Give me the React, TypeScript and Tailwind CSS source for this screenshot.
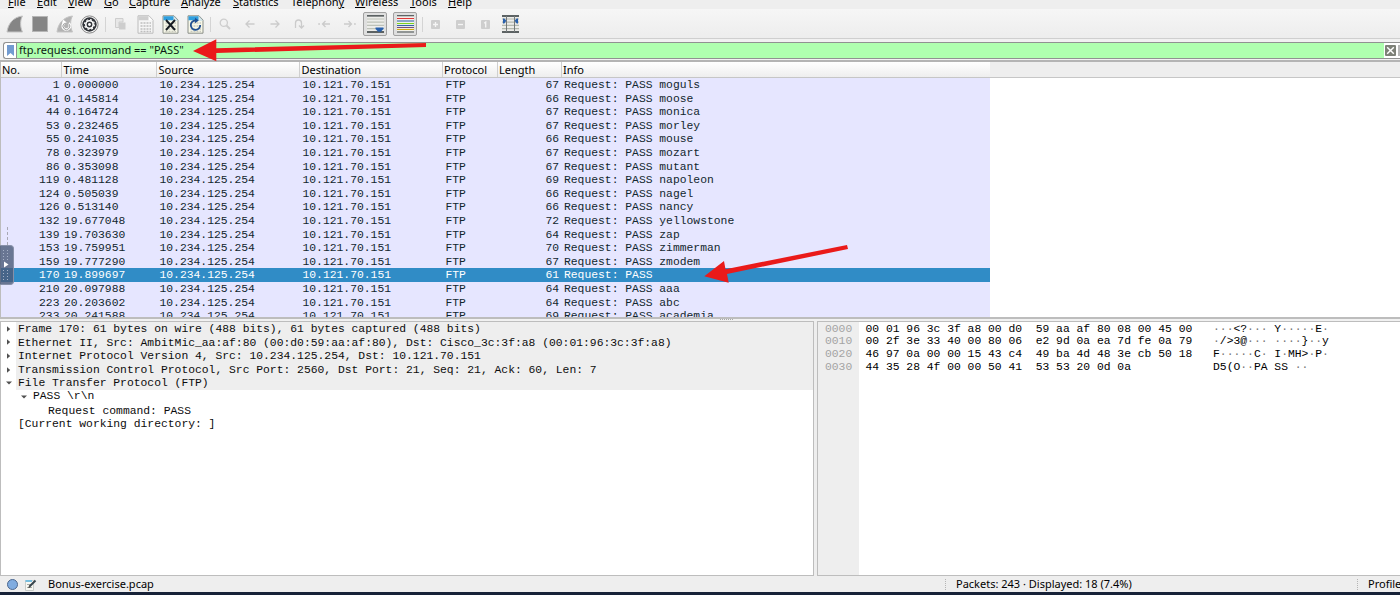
import { ReactNode } from 'react';
import clsx from 'clsx';

interface IPacket {
  no: number;
  time: string;
  length: number;
  info: string;
}

const SELECTED = 170;

const menuItems = [
  { hot: 'F', rest: 'ile', width: 'w-[29px]' },
  { hot: 'E', rest: 'dit', width: 'w-[31px]' },
  { hot: 'V', rest: 'iew', width: 'w-[36px]' },
  { hot: 'G', rest: 'o', width: 'w-[25px]' },
  { hot: 'C', rest: 'apture', width: 'w-[52px]' },
  { hot: 'A', rest: 'nalyze', width: 'w-[52px]' },
  { hot: 'S', rest: 'tatistics', width: 'w-[58px]' },
  { pre: 'Telephon', hot: 'y', rest: '', width: 'w-[64px]' },
  { hot: 'W', rest: 'ireless', width: 'w-[55px]' },
  { hot: 'T', rest: 'ools', width: 'w-[38px]' },
  { hot: 'H', rest: 'elp', width: 'w-[30px]' },
];

const columns = [
  { name: 'No.', width: 'w-[61px] pl-px' },
  { name: 'Time', width: 'w-[95px] pl-[1.5px]' },
  { name: 'Source', width: 'w-[143px] pl-[1.5px]' },
  { name: 'Destination', width: 'w-[143px] pl-[1.5px]' },
  { name: 'Protocol', width: 'w-[55px] pl-px' },
  { name: 'Length', width: 'w-[64px] pl-px' },
];

const packets: IPacket[] = [
  { no: 1, time: '0.000000', length: 67, info: 'moguls' },
  { no: 41, time: '0.145814', length: 66, info: 'moose' },
  { no: 44, time: '0.164724', length: 67, info: 'monica' },
  { no: 53, time: '0.232465', length: 67, info: 'morley' },
  { no: 55, time: '0.241035', length: 66, info: 'mouse' },
  { no: 78, time: '0.323979', length: 67, info: 'mozart' },
  { no: 86, time: '0.353098', length: 67, info: 'mutant' },
  { no: 119, time: '0.481128', length: 69, info: 'napoleon' },
  { no: 124, time: '0.505039', length: 66, info: 'nagel' },
  { no: 126, time: '0.513140', length: 66, info: 'nancy' },
  { no: 132, time: '19.677048', length: 72, info: 'yellowstone' },
  { no: 139, time: '19.703630', length: 64, info: 'zap' },
  { no: 153, time: '19.759951', length: 70, info: 'zimmerman' },
  { no: 159, time: '19.777290', length: 67, info: 'zmodem' },
  { no: 170, time: '19.899697', length: 61, info: '' },
  { no: 210, time: '20.097988', length: 64, info: 'aaa' },
  { no: 223, time: '20.203602', length: 64, info: 'abc' },
  { no: 233, time: '20.241588', length: 69, info: 'academia' },
];

const protocols = [
  { text: 'Frame 170: 61 bytes on wire (488 bits), 61 bytes captured (488 bits)', open: false },
  { text: 'Ethernet II, Src: AmbitMic_aa:af:80 (00:d0:59:aa:af:80), Dst: Cisco_3c:3f:a8 (00:01:96:3c:3f:a8)', open: false },
  { text: 'Internet Protocol Version 4, Src: 10.234.125.254, Dst: 10.121.70.151', open: false },
  { text: 'Transmission Control Protocol, Src Port: 2560, Dst Port: 21, Seq: 21, Ack: 60, Len: 7', open: false },
  { text: 'File Transfer Protocol (FTP)', open: true },
];

const hexRows = [
  { offset: '0000', bytes: '00 01 96 3c 3f a8 00 d0  59 aa af 80 08 00 45 00', ascii: '···<?··· Y·····E·' },
  { offset: '0010', bytes: '00 2f 3e 33 40 00 80 06  e2 9d 0a ea 7d fe 0a 79', ascii: '·/>3@··· ····}··y' },
  { offset: '0020', bytes: '46 97 0a 00 00 15 43 c4  49 ba 4d 48 3e cb 50 18', ascii: 'F·····C· I·MH>·P·' },
  { offset: '0030', bytes: '44 35 28 4f 00 00 50 41  53 53 20 0d 0a', ascii: 'D5(O··PA SS ··' },
];

const Separator = () => <div className="h-[15px] w-px bg-[#d4d4d4]" />;

const Slot = ({ width, children }: { width: string; children: ReactNode }) => (
  <div className={clsx('flex shrink-0 items-center justify-center', width)}>{children}</div>
);

const Fin = ({ restart }: { restart?: boolean }) => (
  <svg width="18" height="18" viewBox="0 0 18 18">
    <path d="M1 17C2 9 7 2 16.5 1C14 5 14 12 16.5 17Z" fill={restart ? '#b3b3b3' : '#858585'} stroke="#c4c4c4" strokeWidth="1" />
    {restart && (
      <>
        <path d="M12.6 8.2A3.6 3.6 0 1 1 8 8.2" fill="none" stroke="#fff" strokeWidth="2.6" />
        <path d="M6 8.6L7 4.4L10.8 7.4Z" fill="#fff" />
        <path d="M12.6 8.6A3.4 3.4 0 1 1 8.2 8.6" fill="none" stroke="#9b9b9b" strokeWidth="1" />
      </>
    )}
  </svg>
);

const FileIcon = ({ kind }: { kind: 'save' | 'close' | 'reload' }) => {
  const dim = kind === 'save';
  return (
    <svg width="17" height="19" viewBox="0 0 17 19">
      <path d="M1 .8H12L16 5V18.2H1Z" fill={dim ? '#f5f5f5' : '#f7f7e8'} stroke={dim ? '#bcbcbc' : '#8a8f88'} strokeWidth="1" />
      <path d="M1.5 1.3H11.7L15.5 5.3H1.5Z" fill={dim ? '#cfcfcf' : '#2f9fdf'} />
      <path d="M11.5 1V5.5H16Z" fill={dim ? '#fff' : '#dce8ea'} />
      <path d="M3.5 8H14M3.5 11H14M3.5 14H14M3.5 16.5H14" stroke={dim ? '#bdbdbd' : '#c9cabf'} strokeWidth="1.5" strokeDasharray="2 1" />
      {kind === 'close' && <path d="M4 5L13 15M13 5L4 15" stroke="#171c22" strokeWidth="1.9" />}
      {kind === 'reload' && (
        <>
          <path d="M13.2 10A4.7 4.7 0 1 1 8.4 5.5" fill="none" stroke="#204f91" strokeWidth="1.8" />
          <path d="M8 2.8L11.8 5.5L8 8.2Z" fill="#204f91" />
        </>
      )}
    </svg>
  );
};

const Arrow = ({ d }: { d: string }) => (
  <svg width="12" height="12" viewBox="0 0 12 12" fill="none" stroke="#cbcbcb" strokeWidth="1.3">
    <path d={d} />
  </svg>
);

const SquareIcon = ({ d }: { d: string }) => (
  <svg width="9" height="9" viewBox="0 0 9 9">
    <rect width="9" height="9" rx="1" fill="#cecece" />
    <path d={d} stroke="#f5f5f5" strokeWidth="1.3" fill="none" />
  </svg>
);

const Toolbar = () => (
  <div className="flex h-[30px] shrink-0 items-center border-b border-[#cfcfcf] bg-gradient-to-b from-[#f6f6f6] to-[#ededed] pt-px pl-[2px]">
    <Slot width="w-[25px]"><Fin /></Slot>
    <Slot width="w-[25px]"><div className="size-4 border border-[#b5b5b5] bg-[#858585]" /></Slot>
    <Slot width="w-[25px]"><Fin restart /></Slot>
    <Slot width="w-[25px]">
      <svg width="19" height="19" viewBox="0 0 19 19">
        <circle cx="9.5" cy="9.5" r="8.6" fill="#fafafa" stroke="#858585" />
        <circle cx="9.5" cy="9.5" r="7.2" fill="#303338" />
        <circle cx="9.5" cy="9.5" r="3.7" fill="none" stroke="#fff" strokeWidth="1.6" />
        <circle cx="9.5" cy="9.5" r="4.9" fill="none" stroke="#fff" strokeWidth="1.2" strokeDasharray="1.9 1.95" />
        <circle cx="9.5" cy="9.5" r="1.4" fill="#fff" />
      </svg>
    </Slot>
    <Slot width="w-[6px]"><Separator /></Slot>
    <Slot width="w-[24px]">
      <svg width="11" height="12" viewBox="0 0 11 12">
        <path d="M.5 .5H8V4H4V9.5H.5Z" fill="#e7e7e7" stroke="#cdcdcd" />
        <rect x="4" y="4.5" width="6.5" height="7" fill="#cdcdcd" />
      </svg>
    </Slot>
    <Slot width="w-[26px]"><FileIcon kind="save" /></Slot>
    <Slot width="w-[24px]"><FileIcon kind="close" /></Slot>
    <Slot width="w-[26px]"><FileIcon kind="reload" /></Slot>
    <Slot width="w-[4px]"><Separator /></Slot>
    <Slot width="w-[26px]">
      <svg width="12" height="12" viewBox="0 0 12 12" fill="none" stroke="#cecece">
        <circle cx="4.8" cy="4.8" r="3.6" strokeWidth="1.3" />
        <path d="M7.5 7.5L11 11" strokeWidth="2" />
      </svg>
    </Slot>
    <Slot width="w-[24px]"><Arrow d="M10.5 6H2M5.5 2.5L2 6L5.5 9.5" /></Slot>
    <Slot width="w-[25px]"><Arrow d="M1.5 6H10M6.5 2.5L10 6L6.5 9.5" /></Slot>
    <Slot width="w-[24px]"><Arrow d="M2.5 10V5A3 3 0 0 1 8.5 5V10M6 7.5L8.5 10L11 7.5" /></Slot>
    <Slot width="w-[26px]"><Arrow d="M12 6H4.5M7.5 3L4.5 6L7.5 9M.2 6H2" /></Slot>
    <Slot width="w-[25px]"><Arrow d="M0 6H7.5M4.5 3L7.5 6L4.5 9M10 6H11.8" /></Slot>
    <Slot width="w-[26px]">
      <div className="flex h-[24px] w-[24px] items-center justify-center rounded-[2px] border border-[#a1a1a1] bg-[#dfdfdf]">
        <svg width="17" height="18" viewBox="0 0 17 18">
          <rect width="17" height="18" fill="#ededea" />
          <path d="M0 .8H17M0 17H17" stroke="#2c3437" strokeWidth="1.3" />
          <path d="M0 4H17M0 7.2H17M0 10.4H17M0 13.6H17" stroke="#bdc1b8" strokeWidth="1.2" />
          <path d="M8.5 12.5H16.5V14L13.8 16.7H11.2L8.5 14Z" fill="#2860ad" />
        </svg>
      </div>
    </Slot>
    <Slot width="w-[34px]">
      <div className="flex h-[24px] w-[24px] items-center justify-center rounded-[2px] border border-[#a1a1a1] bg-[#dfdfdf]">
        <svg width="17" height="18" viewBox="0 0 17 18" strokeWidth="1.1">
          <rect width="17" height="18" fill="#f6f6f3" />
          <path d="M0 .8H17M0 17H17" stroke="#2c3437" />
          <path d="M0 3.5H17" stroke="#df3838" />
          <path d="M0 6H17" stroke="#3465a4" />
          <path d="M0 8.5H17" stroke="#7ed321" />
          <path d="M0 10.5H17" stroke="#3465a4" />
          <path d="M0 12.5H17" stroke="#75507b" />
          <path d="M0 14.5H17" stroke="#d3a90d" />
        </svg>
      </div>
    </Slot>
    <Separator />
    <Slot width="w-[25px]"><SquareIcon d="M4.5 2V7M2 4.5H7" /></Slot>
    <Slot width="w-[25px]"><SquareIcon d="M2 4.5H7" /></Slot>
    <Slot width="w-[25px]"><SquareIcon d="M3.2 3.2L4.7 2V7.4" /></Slot>
    <Slot width="w-[25px]">
      <svg width="17" height="18" viewBox="0 0 17 18">
        <rect width="17" height="18" fill="#ededea" />
        <path d="M0 4H17M0 7.2H17M0 10.4H17M0 13.6H17" stroke="#b3b8ae" strokeWidth="1.2" />
        <path d="M0 1H17M0 17H17" stroke="#2c3437" strokeWidth="1.4" />
        <path d="M4.5 1V17M12.5 1V17" stroke="#74797a" strokeWidth="1" />
        <path d="M1 3.5H2.3L4.3 5.8L2.3 8.5H1ZM16 3.5H14.7L12.7 5.8L14.7 8.5H16Z" fill="#2860ad" />
      </svg>
    </Slot>
  </div>
);

const FilterBar = () => (
  <div className="flex h-[23px] shrink-0 items-start border-b-2 border-[#b4b4b4] bg-[#f1f1f1] pt-[3px] pl-[3px]">
    <div className="flex h-[17px] min-w-0 flex-1 overflow-hidden rounded-l-[3px] border border-r-0 border-[#919191] bg-white">
      <div className="flex w-[12px] items-center justify-center">
        <svg width="7" height="11" viewBox="0 0 7 11"><path d="M0 0H7V11L3.5 8L0 11Z" fill="#729bd0" /></svg>
      </div>
      <div className="flex flex-1 items-center border-l border-[#919191] bg-[#afffaf] pl-[2px] text-[11px] whitespace-pre text-[#0d1a12]">
        ftp.request.command == "PASS"
      </div>
      <div className="flex w-[13px] items-center justify-center">
        <svg width="11" height="11" viewBox="0 0 10 10">
          <rect width="10" height="10" rx="1" fill="#7d8077" />
          <path d="M2 2L8 8M8 2L2 8" stroke="#fff" strokeWidth="1.3" />
        </svg>
      </div>
      <div className="my-[2px] ml-px w-[2px] bg-[#b8b8b8]" />
    </div>
  </div>
);

const PacketList = () => (
  <div className="h-[257px] shrink-0 overflow-hidden border-b-2 border-l border-[#bdbdbd] bg-white">
    <div className="flex h-[16px] border-b border-[#c6c6c6] bg-gradient-to-b from-white to-[#eeeeee] text-[11px] leading-[16px] text-black">
      {columns.map(({ name, width }) => (
        <div key={name} className={clsx('h-[15px] shrink-0 border-r border-[#cfcfcf]', width)}>{name}</div>
      ))}
      <div className="w-[428px] pl-px">Info</div>
      <div className="flex-1 bg-[#eeeeee]" />
    </div>
    <div className="w-[989px] bg-[#e6e6ff] font-['Liberation_Mono',monospace] text-[11.35px] leading-[14.6px] whitespace-pre">
      {packets.map(({ no, time, length, info }) => (
        <div
          key={no}
          className={clsx('flex h-[13.6px]', no === SELECTED ? 'bg-[#308cc6] text-white' : 'text-[#12272e]')}
        >
          <div className="w-[58.5px] text-right">{no}</div>
          <div className="w-[95px] pl-[4.5px]">{time}</div>
          <div className="w-[143px] pl-[5px]">10.234.125.254</div>
          <div className="w-[143px] pl-[5px]">10.121.70.151</div>
          <div className="w-[55px] pl-[5px]">FTP</div>
          <div className="w-[63.5px] text-right">{length}</div>
          <div className="pl-[5px]">{`Request: PASS ${info}`}</div>
        </div>
      ))}
    </div>
  </div>
);

const Expander = ({ open }: { open: boolean }) => (
  <svg width="6" height="6" viewBox="0 0 6 6" className="shrink-0">
    <path d={open ? 'M0 1.5H6L3 4.6Z' : 'M1 .2L4.2 3L1 5.8Z'} fill="#505050" />
  </svg>
);

const PacketDetails = () => (
  <div className="w-[814px] border border-[#bdbdbd] bg-white text-[11.35px] leading-[14.6px] whitespace-pre text-[#0c0c0c]">
    {protocols.map(({ text, open }) => (
      <div key={text} className="flex h-[13.6px]">
        <div className="flex w-[15px] items-center justify-center"><Expander open={open} /></div>
        <div className="flex-1 bg-[#eeeeee] pl-[2px]">{text}</div>
      </div>
    ))}
    <div className="flex h-[13.6px] items-center gap-[6px] pl-[20px]">
      <Expander open />
      <span>PASS \r\n</span>
    </div>
    <div className="h-[13.6px] pl-[47px]">Request command: PASS</div>
    <div className="h-[13.6px] pl-[17px]">[Current working directory: ]</div>
  </div>
);

const PacketBytes = () => (
  <div className="flex min-w-0 flex-1 border border-r-0 border-[#bdbdbd] bg-white text-[11.35px] leading-[12.95px] whitespace-pre">
    <div className="w-[41px] shrink-0 bg-[#eeeeee] pt-[0.5px] pl-[7px] text-[#a4a4a4]">
      {hexRows.map(({ offset }) => <div key={offset}>{offset}</div>)}
    </div>
    <div className="w-[354px] pt-[0.5px] pl-[6.5px] text-black">
      {hexRows.map(({ offset, bytes }) => <div key={offset}>{bytes}</div>)}
    </div>
    <div className="pt-[0.5px] text-black">
      {hexRows.map(({ offset, ascii }) => (
        <div key={offset}>
          {ascii.split('').map((char, i) => (
            <span key={i} className={char === '·' ? 'text-[#777]' : undefined}>{char}</span>
          ))}
        </div>
      ))}
    </div>
  </div>
);

const StatusBar = () => (
  <div className="flex h-[16px] shrink-0 items-center bg-[#eeeeee] pt-px text-[11px] whitespace-nowrap text-black">
    <div className="flex w-[945px] shrink-0 items-center pl-[7px]">
      <div className="size-[11px] rounded-full border border-[#4c678f] bg-[#80ace0]" />
      <svg width="12" height="12" viewBox="0 0 12 12" className="ml-[7px]">
        <path d="M.5 1.5H8.5V11.5H.5Z" fill="#f8f8f3" stroke="#c8ccc9" />
        <path d="M.5 1H7V3H.5Z" fill="#78bfe0" />
        <path d="M2 5.5H6M2 8.5H7" stroke="#a8aaa4" />
        <path d="M4.5 7.5L10.5 1.5" stroke="#37444c" strokeWidth="2" />
        <path d="M3.3 9L4 6.8L5.3 8.2Z" fill="#222" />
      </svg>
      <span className="ml-[11px]">Bonus-exercise.pcap</span>
    </div>
    <div className="h-[11px] shrink-0 border-l border-dotted border-[#b5b5b5]" />
    <div className="w-[411px] shrink-0 pl-[10px]">Packets: 243 · Displayed: 18 (7.4%)</div>
    <div className="h-[11px] shrink-0 border-l border-dotted border-[#b5b5b5]" />
    <div className="pl-[10px]">Profile</div>
  </div>
);

const App = () => (
  <div className="relative flex h-[595px] w-[1400px] flex-col overflow-hidden bg-[#eeeeee] font-['Noto_Sans',sans-serif]">
    <div className="flex h-[9px] shrink-0 items-end pl-[8px] text-[11px] leading-[15px] text-black">
      {menuItems.map(({ pre, hot, rest, width }) => (
        <div key={hot + rest} className={clsx('shrink-0', width)}>
          {pre}<span className="underline underline-offset-1">{hot}</span>{rest}
        </div>
      ))}
    </div>
    <Toolbar />
    <FilterBar />
    <PacketList />
    <div className="flex h-[2px] shrink-0 items-start justify-center bg-[#f1f1f1]">
      <div className="ml-[53px] w-[13px] border-t border-dotted border-[#aaa]" />
    </div>
    <div className="flex h-[255px] shrink-0 gap-[3px] font-['Liberation_Mono',monospace]">
      <PacketDetails />
      <PacketBytes />
    </div>
    <StatusBar />
    <div className="h-[3px] shrink-0 bg-[#172238]" />

    {/* dock handle */}
    <div className="absolute top-[227px] left-[7px] h-[18px] border-l border-dashed border-[#a8a8b4]" />
    <div className="absolute top-[245px] left-0 flex h-[40px] w-[14px] items-center rounded-r-[4px] border border-l-0 border-[#8790a8] bg-[#4c5c7bd0]">
      <svg width="13" height="38" viewBox="0 0 13 38">
        <path d="M3.5 4V14M7.5 4V14M3.5 24V34M7.5 24V34" stroke="#a7b2c7" strokeWidth="1" strokeDasharray="1 2" />
        <path d="M4 15.5L8.5 18.5L4 21.5Z" fill="#fff" />
      </svg>
    </div>

    {/* annotation arrows */}
    <svg className="pointer-events-none absolute inset-0" width="1400" height="595" viewBox="0 0 1400 595">
      <path d="M193 51L216.3 39.3V48.2L426 43V47L216.3 53V61.3Z" fill="#ea1a1a" />
      <path d="M704.3 276.3L724 261L725.5 269.3L847 245L848 249L727 274L728.7 282.7Z" fill="#ea1a1a" />
    </svg>
  </div>
);

export default App;
